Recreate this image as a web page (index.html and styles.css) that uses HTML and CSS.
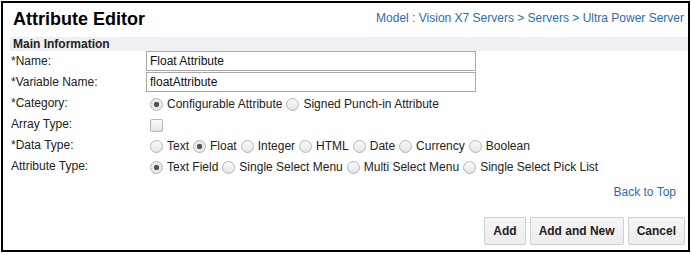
FILE: index.html
```html
<!DOCTYPE html>
<html lang="en">
<head>
    <meta charset="UTF-8">
    <title>Attribute Editor</title>
    <link rel="stylesheet" href="styles.css">
</head>
<body>
    <div class="editor">
        <div class="header">
            <h1>Attribute Editor</h1>
            <a class="crumbs" href="#">Model : Vision X7 Servers &gt; Servers &gt; Ultra Power Server</a>
        </div>

        <div class="section-title">Main Information</div>

        <div class="form">
            <label class="lbl">*Name:</label>
            <div class="field"><input class="txt" type="text" value="Float Attribute"></div>

            <label class="lbl">*Variable Name:</label>
            <div class="field"><input class="txt" type="text" value="floatAttribute"></div>

            <label class="lbl">*Category:</label>
            <div class="field choice">
                <label><input type="radio" name="cat" checked>Configurable Attribute</label>
                <label><input type="radio" name="cat">Signed Punch-in Attribute</label>
            </div>

            <label class="lbl">Array Type:</label>
            <div class="field choice">
                <input type="checkbox">
            </div>

            <label class="lbl">*Data Type:</label>
            <div class="field choice">
                <label><input type="radio" name="dt">Text</label>
                <label><input type="radio" name="dt" checked>Float</label>
                <label><input type="radio" name="dt">Integer</label>
                <label><input type="radio" name="dt">HTML</label>
                <label><input type="radio" name="dt">Date</label>
                <label><input type="radio" name="dt">Currency</label>
                <label><input type="radio" name="dt">Boolean</label>
            </div>

            <label class="lbl">Attribute Type:</label>
            <div class="field choice">
                <label><input type="radio" name="at" checked>Text Field</label>
                <label><input type="radio" name="at">Single Select Menu</label>
                <label><input type="radio" name="at">Multi Select Menu</label>
                <label><input type="radio" name="at">Single Select Pick List</label>
            </div>
        </div>

        <div class="back"><a href="#">Back to Top</a></div>

        <div class="actions">
            <button>Add</button>
            <button>Add and New</button>
            <button>Cancel</button>
        </div>
    </div>
</body>
</html>
```

FILE: styles.css
```css
body {
    margin: 0;
    font-family: "Liberation Sans", Arial, sans-serif;
    font-size: 12px;
    color: #222;
    background: #fff;
}
.editor {
    box-sizing: border-box;
    width: 689px;
    height: 251px;
    margin: 1px 0 0 1px;
    border: 2px solid #000;
    padding: 0 0 0 7px;
    display: flex;
    flex-direction: column;
}
.header {
    display: flex;
    justify-content: space-between;
    align-items: center;
    height: 32px;
    padding: 0 4px 0 3px;
}
h1 {
    margin: 0;
    font-size: 18px;
    font-weight: bold;
    color: #000;
}
a {
    color: #2a6cb3;
    text-decoration: none;
}
.crumbs {
    font-size: 12px;
    margin-top: -2px;
}
.section-title {
    margin-top: 2px;
    height: 14px;
    line-height: 14px;
    padding-left: 3px;
    background: #eff0f4;
    font-weight: bold;
    color: #222;
}
.form {
    display: grid;
    grid-template-columns: 136px 1fr;
    grid-auto-rows: 20px;
    row-gap: 1px;
}
.lbl {
    display: flex;
    align-items: center;
    padding-left: 1px;
}
.field {
    display: flex;
    align-items: center;
}
.txt {
    box-sizing: border-box;
    width: 330px;
    height: 20px;
    margin: 0;
    padding: 0 3px;
    border: 1px solid #a9a9a9;
    font-family: inherit;
    font-size: 12px;
    color: #111;
}
.choice {
    margin-top: 2px;
}
.choice label {
    display: flex;
    align-items: center;
}
input[type="radio"], input[type="checkbox"] {
    appearance: none;
    -webkit-appearance: none;
    box-sizing: border-box;
    width: 13px;
    height: 13px;
    margin: 0 4px 0 4px;
    border: 1px solid #b5b5b5;
    background: linear-gradient(#fafafa, #e4e4e4);
}
input[type="radio"] {
    border-radius: 50%;
}
input[type="radio"]:checked {
    background: radial-gradient(circle, #555 0 2.5px, #eaeaea 3px);
}
input[type="checkbox"] {
    border-radius: 2px;
}
.back {
    text-align: right;
    padding-right: 12px;
    margin-top: 9px;
}
.actions {
    display: flex;
    justify-content: flex-end;
    gap: 4px;
    margin-top: 18px;
    padding-right: 3px;
}
button {
    height: 28px;
    padding: 0 8px;
    border: 1px solid #cfcfcf;
    border-radius: 2px;
    background: linear-gradient(#f6f6f6, #ececec);
    font-family: inherit;
    font-size: 12px;
    font-weight: bold;
    color: #222;
}
```
